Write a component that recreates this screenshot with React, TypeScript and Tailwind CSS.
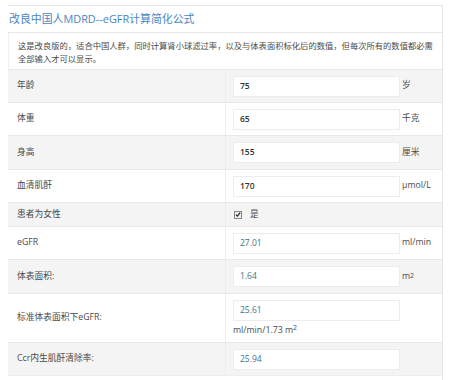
const FONT = { fontFamily: '"Open Sans", "Noto Sans CJK SC", sans-serif' };

interface Row {
  label: string;
  value?: string;
  unit?: React.ReactNode;
  kind?: 'input' | 'result' | 'check' | 'stacked';
  h: string;
  gray: boolean;
}

const rows: Row[] = [
  { label: '年龄', value: '75', unit: '岁', kind: 'input', h: 'h-[33px]', gray: true },
  { label: '体重', value: '65', unit: '千克', kind: 'input', h: 'h-[33px]', gray: false },
  { label: '身高', value: '155', unit: '厘米', kind: 'input', h: 'h-[34px]', gray: true },
  { label: '血清肌酐', value: '170', unit: 'μmol/L', kind: 'input', h: 'h-[33px]', gray: false },
  { label: '患者为女性', kind: 'check', h: 'h-[24px]', gray: true },
  { label: 'eGFR', value: '27.01', unit: 'ml/min', kind: 'result', h: 'h-[33px]', gray: false },
  {
    label: '体表面积:',
    value: '1.64',
    unit: (
      <span>
        m<sup className="text-[7px] relative -top-[1px]">2</sup>
      </span>
    ),
    kind: 'result',
    h: 'h-[34px]',
    gray: true,
  },
  {
    label: '标准体表面积下eGFR:',
    value: '25.61',
    unit: (
      <span>
        ml/min/1.73 m<sup className="text-[7px]">2</sup>
      </span>
    ),
    kind: 'stacked',
    h: 'h-[49px]',
    gray: false,
  },
  { label: 'Ccr内生肌酐清除率:', value: '25.94', kind: 'result', h: 'h-[33px]', gray: true },
];

function ValueBox({ value, result }: { value?: string; result?: boolean }) {
  return (
    <div
      className={`w-[167px] h-[21px] shrink-0 bg-white border border-[#ececec] flex items-center pl-[6px] text-[8.5px] ${
        result ? 'text-[#3d7486]' : 'text-[#333] font-semibold'
      }`}
    >
      {value}
    </div>
  );
}

export default function App() {
  return (
    <div className="w-[450px] h-[380px] bg-white overflow-hidden pt-[5px]" style={FONT}>
      <div className="ml-[8px] w-[435px] border-t border-r border-[#e6e6e6]">
        <div className="h-[27px] flex items-center pl-[1px] border-b border-[#e6e6e6]">
          <span className="text-[10.9px] text-[#4a84c2]">改良中国人MDRD--eGFR计算简化公式</span>
        </div>
        <div className="h-[36px] pl-[9px] pt-[6px] text-[8.3px] leading-[13px] text-[#4a4a4a] border-l border-[#f0f0f0]">
          <div className="whitespace-nowrap">
            这是改良版的，适合中国人群，同时计算肾小球滤过率，以及与体表面积标化后的数值，但每次所有的数值都必需
          </div>
          <div>全部输入才可以显示。</div>
        </div>
        {rows.map((r) => (
          <div
            key={r.label}
            className={`flex border-t border-[#e8e8e8] ${r.h} ${r.gray ? 'bg-[#f4f4f4]' : 'bg-white'}`}
          >
            <div className="w-[218px] shrink-0 flex items-center pl-[9px] text-[8.75px] text-[#4a4a4a] border-r border-[#ececec]">
              {r.label}
            </div>
            {r.kind === 'check' ? (
              <div className="flex items-center pl-[8px] gap-[8px] text-[8.75px] text-[#4a4a4a]">
                <span className="w-[8px] h-[8px] border border-[#888] bg-[#eee] flex items-center justify-center">
                  <svg viewBox="0 0 10 10" className="w-[7px] h-[7px]">
                    <path d="M1.5 5.2 L4 7.8 L8.6 2" fill="none" stroke="#222" strokeWidth="2" />
                  </svg>
                </span>
                <span>是</span>
              </div>
            ) : r.kind === 'stacked' ? (
              <div className="flex flex-col pl-[7px] pt-[6px]">
                <ValueBox value={r.value} result />
                <div className="text-[8.75px] text-[#4a4a4a] mt-[3px] leading-[12px]">{r.unit}</div>
              </div>
            ) : (
              <div className="flex items-center pl-[7px]">
                <ValueBox value={r.value} result={r.kind === 'result'} />
                {r.unit && <span className="ml-[2px] text-[8.75px] text-[#4a4a4a]">{r.unit}</span>}
              </div>
            )}
          </div>
        ))}
        <div className="border-t border-[#eee] h-[10px]" />
      </div>
    </div>
  );
}
